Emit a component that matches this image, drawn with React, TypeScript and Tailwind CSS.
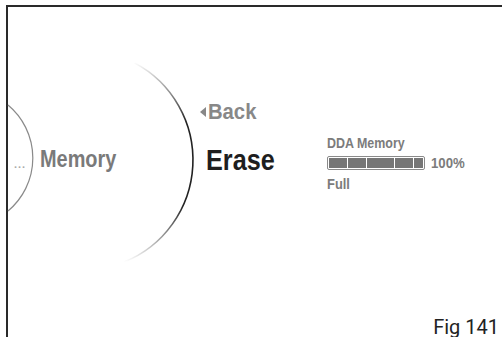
const sans = { fontFamily: '"Liberation Sans", Arial, sans-serif' };

const segments = [18, 18, 27, 18, 9];

export default function App() {
  return (
    <div className="relative w-[502px] h-[337px] overflow-hidden bg-white pt-[5px] pl-[6px]">
      <div className="relative flex h-full flex-col border-t-2 border-l-2 border-[#2a2a2a]">
        {/* menu row, condensed bold type */}
        <div className="flex items-start font-bold" style={sans}>
          <div className="w-[32px] pl-[6px] pt-[152px] text-[11px] leading-none tracking-[1px] text-[#aaaaaa]">...</div>

          <div className="w-[160px] pt-[141px] text-[23px] leading-none text-[#7a7a7a]">
            <div className="origin-left scale-x-[0.865]">Memory</div>
          </div>

          <div className="flex w-[127px] flex-col pt-[94px]">
            <div className="flex items-center gap-[2px] text-[22px] leading-none text-[#888888]">
              <span className="h-0 w-0 border-y-[5px] border-r-[6px] border-y-transparent border-r-[#888888]" />
              <span className="origin-left scale-x-[0.92]">Back</span>
            </div>
            <div className="ml-[6px] mt-[23px] origin-left scale-x-[0.87] text-[29px] leading-none text-[#1e1e1e]">Erase</div>
          </div>

          <div className="flex flex-col pt-[128px] text-[15px] leading-none text-[#7c7c7c]">
            <div className="origin-left scale-x-[0.83] whitespace-nowrap">DDA Memory</div>
            <div className="mt-[5px] flex items-center">
              <div className="flex h-[14px] w-[98px] gap-px rounded-[2px] border border-[#8a8a8a] p-px">
                {segments.map((w, i) => (
                  <div key={i} className="h-full bg-[#767676]" style={{ width: w }} />
                ))}
              </div>
              <span className="ml-[6px] origin-left scale-x-[0.88] whitespace-nowrap">100%</span>
            </div>
            <div className="mt-[6px] origin-left scale-x-[0.86]">Full</div>
          </div>
        </div>

        <div
          className="mt-auto mr-[3px] self-end text-[20px] leading-none text-[#222222]"
          style={{ fontFamily: 'Roboto, "Liberation Sans", sans-serif' }}
        >
          Fig 141
        </div>
      </div>

      {/* arcs */}
      <svg className="pointer-events-none absolute inset-0" width="502" height="337" viewBox="0 0 502 337">
        <defs>
          <linearGradient id="arcFade" gradientUnits="userSpaceOnUse" x1="0" y1="62" x2="0" y2="262">
            <stop offset="0" stopColor="#222222" stopOpacity="0" />
            <stop offset="0.3" stopColor="#222222" stopOpacity="1" />
            <stop offset="0.72" stopColor="#222222" stopOpacity="1" />
            <stop offset="1" stopColor="#222222" stopOpacity="0" />
          </linearGradient>
        </defs>
        <path d="M 8 105 A 69 69 0 0 1 8 211" fill="none" stroke="#8a8a8a" strokeWidth="1.2" />
        <path d="M 134.6 62.9 A 110 110 0 0 1 124.2 262" fill="none" stroke="url(#arcFade)" strokeWidth="1.6" />
      </svg>
    </div>
  );
}
